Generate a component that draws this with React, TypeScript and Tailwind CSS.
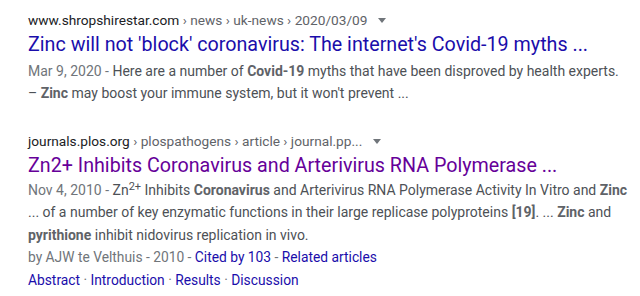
const font = { fontFamily: "Roboto, 'Liberation Sans', Arial, sans-serif" };

function Caret() {
	return (
		<svg width="10" height="10" viewBox="0 0 10 10" className="ml-[10px] inline-block">
			<path d="M1 3 L9 3 L5 8 Z" fill="#70757a" />
		</svg>
	);
}

export default function App() {
	return (
		<div className="w-[640px] h-[296px] bg-white overflow-hidden pl-[28px] pt-[10px]" style={font}>
			<section>
				<div className="flex items-center text-[13.7px] leading-[20px] text-[#5f6368] whitespace-nowrap">
					<span className="text-[#202124]">www.shropshirestar.com</span>
					<span>&nbsp;› news › uk-news › 2020/03/09</span>
					<Caret />
				</div>
				<h3 className="mt-[2px] text-[19.7px] leading-[26px] text-[#1a0dab] whitespace-nowrap">
					Zinc will not 'block' coronavirus: The internet's Covid-19 myths ...
				</h3>
				<div className="mt-[2px] text-[14px] leading-[22px] text-[#4d5156] w-[600px]">
					<span className="text-[#70757a]">Mar 9, 2020 - </span>
					Here are a number of <b className="text-[#5f6368]">Covid-19</b> myths that have been disproved by health experts.
					<br />– <b className="text-[#5f6368]">Zinc</b> may boost your immune system, but it won't prevent ...
				</div>
			</section>

			<section className="mt-[27px]">
				<div className="flex items-center text-[13.7px] leading-[20px] text-[#5f6368] whitespace-nowrap">
					<span className="text-[#202124]">journals.plos.org</span>
					<span>&nbsp;› plospathogens › article › journal.pp...</span>
					<Caret />
				</div>
				<h3 className="mt-[2px] text-[19.7px] leading-[26px] text-[#660099] whitespace-nowrap">
					Zn2+ Inhibits Coronavirus and Arterivirus RNA Polymerase ...
				</h3>
				<div className="text-[14px] leading-[22.4px] text-[#4d5156] w-[610px]">
					<span className="text-[#70757a]">Nov 4, 2010 - </span>
					Zn<sup className="text-[11px] leading-none">2+</sup> Inhibits <b className="text-[#5f6368]">Coronavirus</b> and Arterivirus RNA Polymerase Activity In Vitro and <b className="text-[#5f6368]">Zinc</b>
					<br />... of a number of key enzymatic functions in their large replicase polyproteins <b className="text-[#5f6368]">[19]</b>. ... <b className="text-[#5f6368]">Zinc</b> and
					<br /><b className="text-[#5f6368]">pyrithione</b> inhibit nidovirus replication in vivo.
				</div>
				<div className="text-[13.8px] leading-[22.4px] text-[#70757a] whitespace-nowrap">
					by AJW te Velthuis - 2010 - <a className="text-[#1a0dab]">Cited by 103</a> - <a className="text-[#1a0dab]">Related articles</a>
				</div>
				<div className="text-[13.8px] leading-[22.4px] text-[#70757a] whitespace-nowrap">
					<a className="text-[#1a0dab]">Abstract</a> · <a className="text-[#1a0dab]">Introduction</a> · <a className="text-[#1a0dab]">Results</a> · <a className="text-[#1a0dab]">Discussion</a>
				</div>
			</section>
		</div>
	);
}
